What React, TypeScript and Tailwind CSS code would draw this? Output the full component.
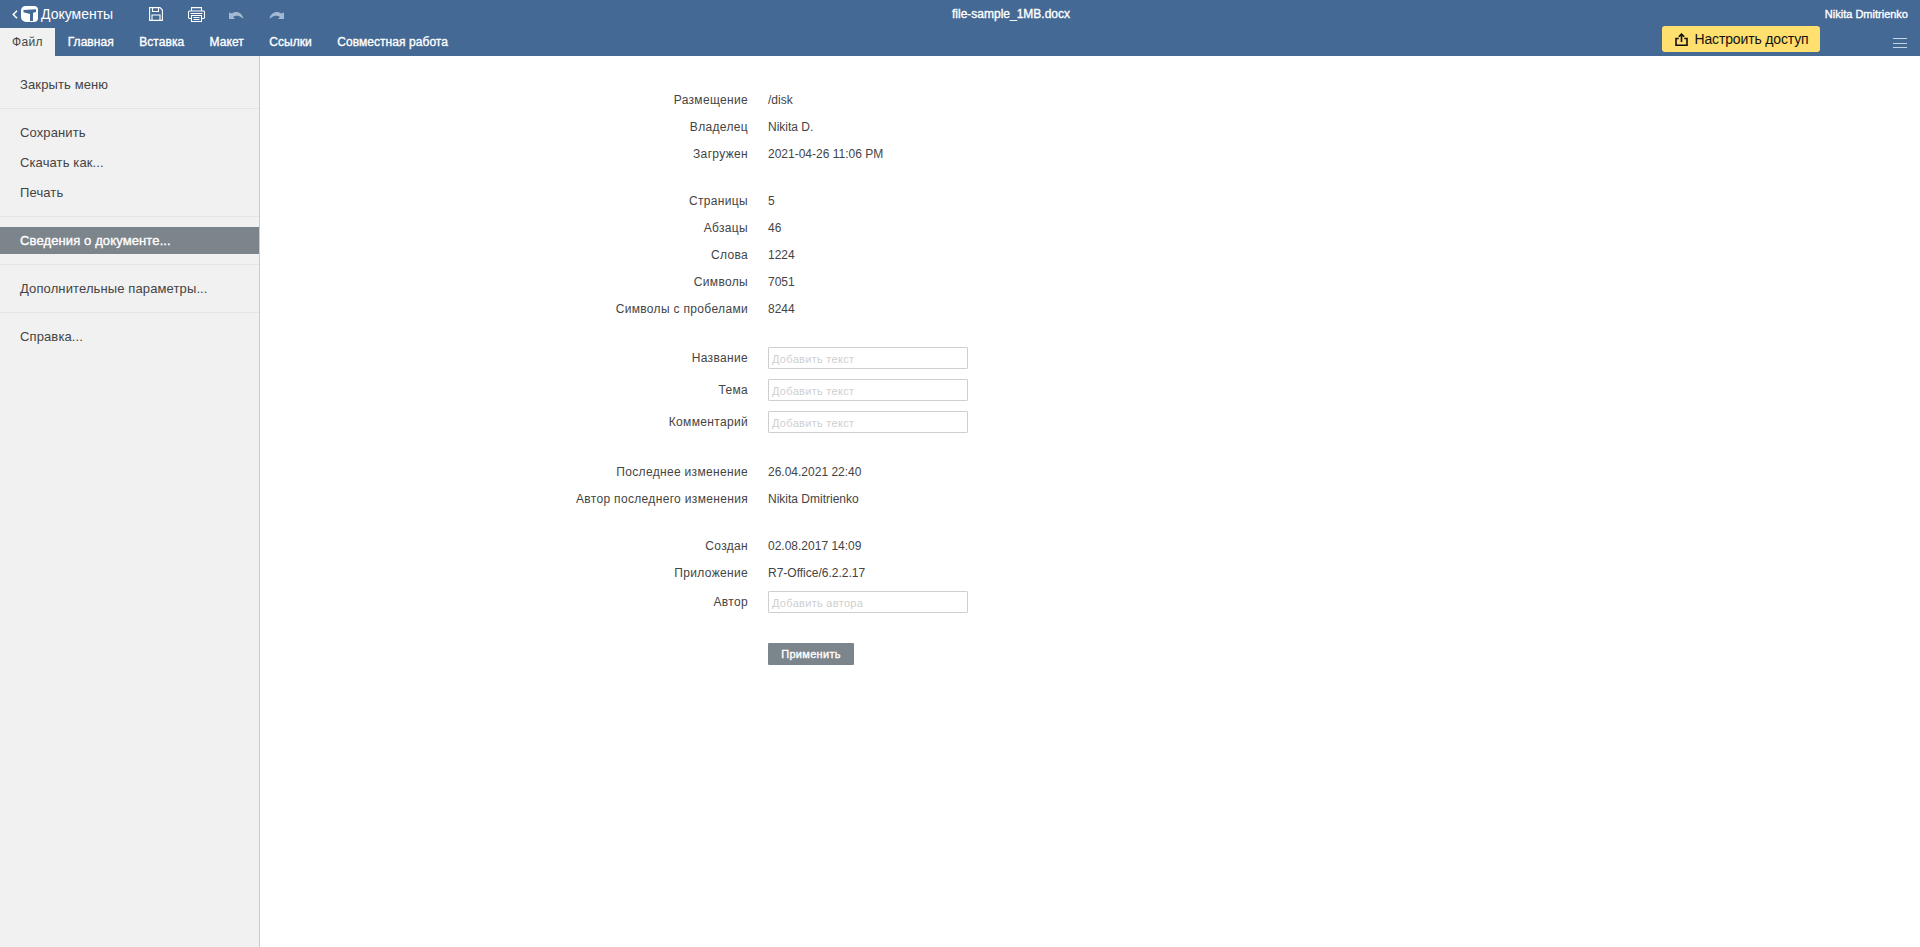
import React from "react";

const font = "font-['Liberation_Sans',Arial,sans-serif]";

function Logo() {
  return (
    <svg width="17" height="16" viewBox="0 0 17 16" className="shrink-0">
      <path d="M4.500 0H13a4 4 0 0 1 4 4v8a4 4 0 0 1-4 4H5a5 5 0 0 1-5-5V4.500A4.500 4.500 0 0 1 4.500 0z" fill="#fff" />
      <path d="M2.500 4 15 3.200V6l-3 .8V15H9V8L2.500 6.200z" fill="#446995" />
    </svg>
  );
}

function SaveIcon() {
  return (
    <svg width="14" height="14" viewBox="0 0 14 14" fill="none" stroke="#fff" strokeWidth="1.100">
      <path d="M.6.600h10.400l2.400 2.400v10.400H.6z" />
      <path d="M3.500.600v3.900h6V.600M3 13.400V8h8v5.400" />
    </svg>
  );
}

function PrintIcon() {
  return (
    <svg width="17" height="15" viewBox="0 0 17 15" fill="none" stroke="#fff" strokeWidth="1.100">
      <path d="M3.500 4V.6h10V4M3.500 11.500H1.500a1 1 0 0 1-1-1V5a1 1 0 0 1 1-1h14a1 1 0 0 1 1 1v5.500a1 1 0 0 1-1 1h-2" />
      <path d="M3.500 8.500h10v6h-10zM5.500 10.500h6M5.500 12.500h6M2.500 6.500h12" />
    </svg>
  );
}

function UndoIcon({ flip }: { flip?: boolean }) {
  return (
    <svg width="15" height="9" viewBox="0 0 15 9" className={flip ? "-scale-x-100" : ""}>
      <path d="M0 2.500V9h6L4 7c3-2 6-1.500 8.500.5l2 1c-1-4-4-6.500-7.500-6.500-1.500 0-3 .5-4 1.500z" fill="#a3b9d1" />
    </svg>
  );
}

function ShareIcon() {
  return (
    <svg width="13" height="13" viewBox="0 0 13 13" fill="none" stroke="#111" strokeWidth="1.600">
      <path d="M3.800 5.500H1v6.700h11V5.500H9.200" />
      <path d="M6.500 9V1.400M3.800 3.800 6.500 1.100l2.700 2.700" />
    </svg>
  );
}

const tabs = ["Главная", "Вставка", "Макет", "Ссылки", "Совместная работа"];

const ru = "tracking-[0.33px]";
const faux = "[-webkit-text-stroke:0.35px_currentColor]";

function MenuItem({ children, active, className = "" }: { children: React.ReactNode; active?: boolean; className?: string }) {
  return (
    <div
      className={`h-[27px] leading-[27px] pl-5 text-[13px] tracking-[0.12px] ${
        active ? `bg-[#7d858c] text-white ${faux}` : "text-[#444444]"
      } ${className}`}
    >
      {children}
    </div>
  );
}

function Row({ label, value }: { label: string; value: string }) {
  return (
    <div className="flex items-center h-[27px]">
      <div className={`w-[188px] text-right text-[12px] text-[#444444] whitespace-nowrap ${ru}`}>{label}</div>
      <div className="ml-5 text-[12px] text-[#444444] whitespace-nowrap">{value}</div>
    </div>
  );
}

function InputRow({ label, placeholder }: { label: string; placeholder: string }) {
  return (
    <div className="flex items-center h-8">
      <div className={`w-[188px] text-right text-[12px] text-[#444444] whitespace-nowrap ${ru}`}>{label}</div>
      <div className="ml-5 w-[200px] h-[22px] border border-[#cfcfcf] rounded-[1px] pl-[3px] text-[11px] leading-[23px] tracking-[0.3px] text-[#cfcfcf] bg-white">
        {placeholder}
      </div>
    </div>
  );
}

export default function App() {
  return (
    <div className={`${font} w-[1920px] h-[947px] flex flex-col overflow-hidden bg-white`}>
      <header className="h-14 shrink-0 bg-[#446995] flex flex-col">
        <div className="h-7 flex items-center">
          <div className="w-[300px] shrink-0 flex items-center">
            <svg width="6" height="9" viewBox="0 0 6 9" className="ml-3" fill="none" stroke="#fff" strokeWidth="1.600">
              <path d="M5 .8 1.300 4.500 5 8.200" />
            </svg>
            <span className="ml-[3px]"><Logo /></span>
            <span className="ml-[3px] text-[14px] text-white">Документы</span>
            <span className="ml-9 flex"><SaveIcon /></span>
            <span className="ml-[25px] flex"><PrintIcon /></span>
            <span className="ml-[24px] flex"><UndoIcon /></span>
            <span className="ml-[25px] flex"><UndoIcon flip /></span>
          </div>
          <div className={`flex-1 text-center text-[12px] text-white ${faux}`}>file-sample_1MB.docx</div>
          <div className={`w-[198px] shrink-0 pr-3 text-right text-[11px] text-white ${faux}`}>Nikita Dmitrienko</div>
        </div>
        <div className="h-7 flex items-center">
          <div className={`h-7 w-[55px] bg-[#f1f1f1] text-[#444444] text-[12px] leading-7 text-center ${ru}`}>Файл</div>
          {tabs.map((t) => (
            <div key={t} className={`px-[12.7px] text-[12px] text-white whitespace-nowrap tracking-[0.06px] ${faux}`}>{t}</div>
          ))}
          <div className="ml-auto flex items-start h-7">
            <button className="h-[26px] w-[158px] -mt-[2px] pl-[2px] rounded-[3px] bg-[#ffdf6e] flex items-center justify-center gap-[6px] text-[14px] tracking-[-0.15px] text-[#111111]">
              <ShareIcon />
              Настроить доступ
            </button>
            <div className="ml-[73px] mr-[13px] w-[14px] mt-[10px] flex flex-col gap-[3.500px]">
              <div className="h-px bg-[#c5d3e2]" />
              <div className="h-px bg-[#c5d3e2]" />
              <div className="h-px bg-[#c5d3e2]" />
            </div>
          </div>
        </div>
      </header>
      <div className="flex-1 flex min-h-0">
        <aside className="w-[260px] shrink-0 bg-[#f1f1f1] border-r border-[#cbcbcb] pt-[5px]">
          <div className="py-[10px] border-b border-[#e4e4e4]">
            <MenuItem>Закрыть меню</MenuItem>
          </div>
          <div className="py-[10px] border-b border-[#e4e4e4] flex flex-col gap-[3px]">
            <MenuItem>Сохранить</MenuItem>
            <MenuItem>Скачать как...</MenuItem>
            <MenuItem>Печать</MenuItem>
          </div>
          <div className="py-[10px] border-b border-[#e4e4e4]">
            <MenuItem active>Сведения о документе...</MenuItem>
          </div>
          <div className="py-[10px] border-b border-[#e4e4e4]">
            <MenuItem>Дополнительные параметры...</MenuItem>
          </div>
          <div className="py-[10px]">
            <MenuItem>Справка...</MenuItem>
          </div>
        </aside>
        <main className="flex-1 pt-[30px] pl-[300px] flex flex-col">
          <div className="flex flex-col gap-5">
            <section>
              <Row label="Размещение" value="/disk" />
              <Row label="Владелец" value="Nikita D." />
              <Row label="Загружен" value="2021-04-26 11:06 PM" />
            </section>
            <section>
              <Row label="Страницы" value="5" />
              <Row label="Абзацы" value="46" />
              <Row label="Слова" value="1224" />
              <Row label="Символы" value="7051" />
              <Row label="Символы с пробелами" value="8244" />
            </section>
            <section>
              <InputRow label="Название" placeholder="Добавить текст" />
              <InputRow label="Тема" placeholder="Добавить текст" />
              <InputRow label="Комментарий" placeholder="Добавить текст" />
            </section>
            <section>
              <Row label="Последнее изменение" value="26.04.2021 22:40" />
              <Row label="Автор последнего изменения" value="Nikita Dmitrienko" />
            </section>
            <section>
              <Row label="Создан" value="02.08.2017 14:09" />
              <Row label="Приложение" value="R7-Office/6.2.2.17" />
              <InputRow label="Автор" placeholder="Добавить автора" />
            </section>
          </div>
          <button className={`mt-[25px] ml-[208px] w-[86px] h-[22px] bg-[#7d858c] rounded-[1px] text-white text-[11px] tracking-[0.3px] ${faux}`}>
            Применить
          </button>
        </main>
      </div>
    </div>
  );
}
